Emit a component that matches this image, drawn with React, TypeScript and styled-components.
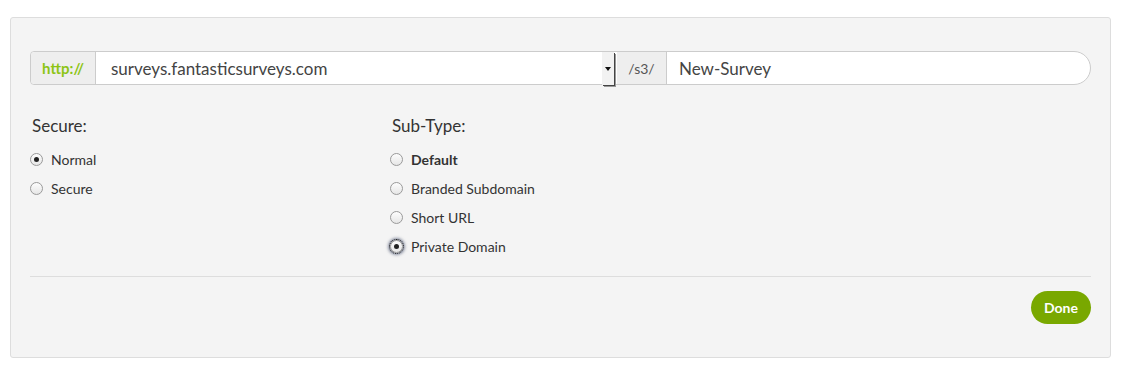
import * as React from 'react'
import styled, { createGlobalStyle } from 'styled-components'

const GlobalStyle = createGlobalStyle`
  body {
    margin: 0;
    background: #fff;
    font-family: Lato, "Open Sans", sans-serif;
    color: #333;
  }
`

const Panel = styled.div`
  margin: 17px 0 0 10px;
  width: 1101px;
  height: 341px;
  box-sizing: border-box;
  background: #f4f4f4;
  border: 1px solid #ddd;
  border-radius: 3px;
  padding: 33px 19px 0;
`

const InputGroup = styled.div`
  display: flex;
  height: 34px;
  box-sizing: border-box;
  border: 1px solid #ccc;
  border-radius: 4px 17px 17px 4px;
  background: #fff;
`

const Addon = styled.div<{ $accent?: boolean; $w: number }>`
  flex: 0 0 ${p => p.$w}px;
  display: flex;
  align-items: center;
  justify-content: center;
  background: #eee;
  color: ${p => (p.$accent ? '#8cc414' : '#555')};
  font-weight: ${p => (p.$accent ? 700 : 400)};
  font-size: ${p => (p.$accent ? 15 : 14)}px;
  border-right: 1px solid #ccc;
  border-radius: ${p => (p.$accent ? '4px 0 0 4px' : '0')};
  box-sizing: border-box;
`

const SelectBox = styled.div`
  flex: 0 0 521px;
  display: flex;
  align-items: center;
  position: relative;
  padding-left: 15px;
  font-size: 17px;
  color: #444;
  box-sizing: border-box;
`

const SelectArrow = styled.div`
  position: absolute;
  right: 3px;
  top: 0;
  bottom: -1px;
  width: 12px;
  background: #f2f2f2;
  box-shadow: 1px 1px 0 #444, 2px 2px 0 #999;
  display: flex;
  align-items: center;
  justify-content: center;
  &::after {
    content: '';
    border-left: 3px solid transparent;
    border-right: 3px solid transparent;
    border-top: 4px solid #111;
  }
`

const TextField = styled.div`
  flex: 1;
  display: flex;
  align-items: center;
  padding-left: 12px;
  font-size: 17px;
  color: #444;
`

const Columns = styled.div`
  display: grid;
  grid-template-columns: 360px 1fr;
  margin-top: 30px;
`

const Group = styled.div`
  display: flex;
  flex-direction: column;
`

const GroupTitle = styled.div`
  font-size: 17px;
  color: #333;
  height: 22px;
  line-height: 22px;
  padding-left: 2px;
  margin-bottom: 8px;
`

const Option = styled.label`
  display: flex;
  align-items: center;
  gap: 8px;
  height: 29px;
  font-size: 14px;
  color: #333;
`

const OptionText = styled.span<{ $bold?: boolean }>`
  font-weight: ${p => (p.$bold ? 700 : 400)};
`

const Radio = styled.span<{ $checked?: boolean; $focus?: boolean }>`
  width: 13px;
  height: 13px;
  box-sizing: border-box;
  border-radius: 50%;
  border: 1px solid #9a9a9a;
  background: linear-gradient(#fdfdfd, #e6e6e6);
  display: flex;
  align-items: center;
  justify-content: center;
  ${p => p.$focus && `
    outline: 1px dotted #222;
    outline-offset: 0px;
    box-shadow: 0 0 3px 2px rgba(60, 70, 100, 0.6);
  `}
  &::after {
    content: '';
    display: ${p => (p.$checked ? 'block' : 'none')};
    width: 5px;
    height: 5px;
    border-radius: 50%;
    background: #222;
  }
`

const Divider = styled.hr`
  border: 0;
  border-top: 1px solid #ddd;
  margin: 15px 0 0;
`

const Footer = styled.div`
  display: flex;
  justify-content: flex-end;
  padding-top: 14px;
`

const DoneButton = styled.button`
  width: 60px;
  height: 33px;
  border: 0;
  border-radius: 17px;
  background: #79a800;
  color: #fff;
  font-family: Lato, "Open Sans", sans-serif;
  font-weight: 700;
  font-size: 14px;
  cursor: pointer;
`

type Opt = { label: string; checked?: boolean; bold?: boolean; focus?: boolean }

const secureOpts: Opt[] = [{ label: 'Normal', checked: true }, { label: 'Secure' }]
const subTypeOpts: Opt[] = [
  { label: 'Default', bold: true },
  { label: 'Branded Subdomain' },
  { label: 'Short URL' },
  { label: 'Private Domain', checked: true, focus: true },
]

const OptionList = ({ title, options }: { title: string; options: Opt[] }) => (
  <Group>
    <GroupTitle>{title}</GroupTitle>
    {options.map(o => (
      <Option key={o.label}>
        <Radio $checked={o.checked} $focus={o.focus} />
        <OptionText $bold={o.bold}>{o.label}</OptionText>
      </Option>
    ))}
  </Group>
)

export default function App() {
  return (
    <>
      <GlobalStyle />
      <Panel>
        <InputGroup>
          <Addon $accent $w={65}>http://</Addon>
          <SelectBox>
            surveys.fantasticsurveys.com
            <SelectArrow />
          </SelectBox>
          <Addon $w={50}>/s3/</Addon>
          <TextField>New-Survey</TextField>
        </InputGroup>
        <Columns>
          <OptionList title="Secure:" options={secureOpts} />
          <OptionList title="Sub-Type:" options={subTypeOpts} />
        </Columns>
        <Divider />
        <Footer>
          <DoneButton>Done</DoneButton>
        </Footer>
      </Panel>
    </>
  )
}
